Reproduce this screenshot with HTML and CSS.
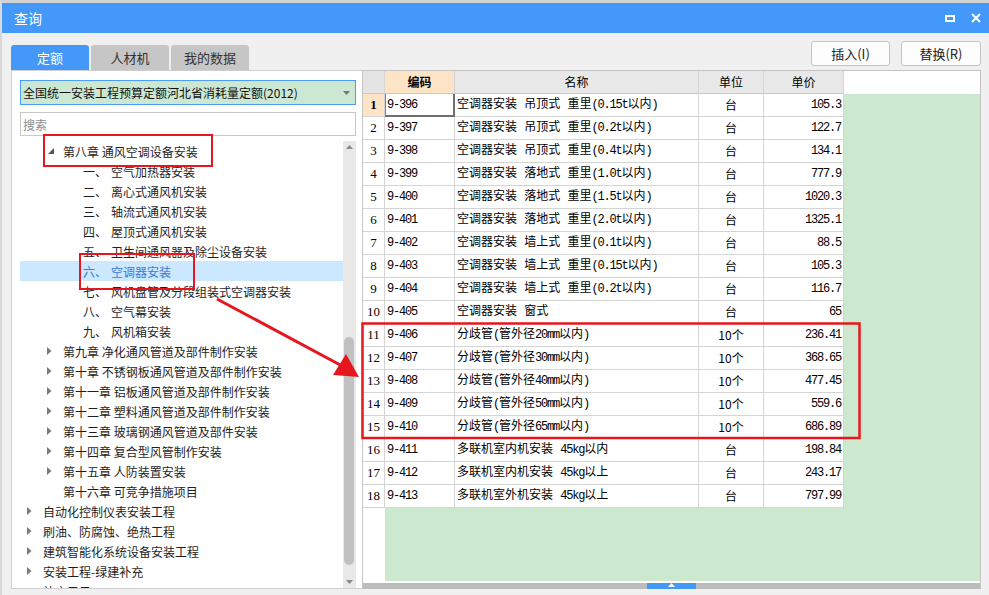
FILE: index.html
```html
<!DOCTYPE html>
<html lang="zh-CN">
<head>
<meta charset="utf-8">
<title>查询</title>
<link rel="stylesheet" href="styles.css">
</head>
<body>
<div class="page">
  <div class="window">
    <div class="titlebar">
      <span class="title">查询</span>
      <svg class="wb-max" width="10" height="7" viewBox="0 0 10 7"><rect x="1" y="1" width="8" height="5" fill="none" stroke="#fff" stroke-width="2"/></svg>
      <svg class="wb-close" width="10" height="10" viewBox="0 0 10 10"><path d="M1 1L9 9M9 1L1 9" stroke="#fff" stroke-width="2"/></svg>
    </div>
    <div class="content">
      <div class="toolbar">
        <div class="tabs">
          <div class="tab active">定额</div>
          <div class="tab">人材机</div>
          <div class="tab">我的数据</div>
        </div>
        <div class="actions">
          <button class="btn btn-insert">插入(I)</button>
          <button class="btn btn-replace">替换(R)</button>
        </div>
      </div>
      <div class="main">
        <div class="left">
          <div class="select">
            <span class="select-text">全国统一安装工程预算定额河北省消耗量定额(2012)</span>
            <svg class="caret" width="7" height="4" viewBox="0 0 7 4"><polygon points="0,0 7,0 3.5,4"/></svg>
          </div>
          <div class="search">搜索</div>
          <div class="tree-wrap">
            <div class="tree">
              <div class="row l2"><span class="exp"><svg class="open" width="6" height="6" viewBox="0 0 6 6"><polygon points="6,0 6,6 0,6"/></svg></span><span>第八章 通风空调设备安装</span></div>
              <div class="row l3"><span class="num">一、</span><span>空气加热器安装</span></div>
              <div class="row l3"><span class="num">二、</span><span>离心式通风机安装</span></div>
              <div class="row l3"><span class="num">三、</span><span>轴流式通风机安装</span></div>
              <div class="row l3"><span class="num">四、</span><span>屋顶式通风机安装</span></div>
              <div class="row l3"><span class="num">五、</span><span>卫生间通风器及除尘设备安装</span></div>
              <div class="row l3 sel"><span class="num">六、</span><span>空调器安装</span></div>
              <div class="row l3"><span class="num">七、</span><span>风机盘管及分段组装式空调器安装</span></div>
              <div class="row l3"><span class="num">八、</span><span>空气幕安装</span></div>
              <div class="row l3"><span class="num">九、</span><span>风机箱安装</span></div>
              <div class="row l2"><span class="exp"><svg width="5" height="8" viewBox="0 0 5 8"><polygon points="0,0 4.5,4 0,8"/></svg></span><span>第九章 净化通风管道及部件制作安装</span></div>
              <div class="row l2"><span class="exp"><svg width="5" height="8" viewBox="0 0 5 8"><polygon points="0,0 4.5,4 0,8"/></svg></span><span>第十章 不锈钢板通风管道及部件制作安装</span></div>
              <div class="row l2"><span class="exp"><svg width="5" height="8" viewBox="0 0 5 8"><polygon points="0,0 4.5,4 0,8"/></svg></span><span>第十一章 铝板通风管道及部件制作安装</span></div>
              <div class="row l2"><span class="exp"><svg width="5" height="8" viewBox="0 0 5 8"><polygon points="0,0 4.5,4 0,8"/></svg></span><span>第十二章 塑料通风管道及部件制作安装</span></div>
              <div class="row l2"><span class="exp"><svg width="5" height="8" viewBox="0 0 5 8"><polygon points="0,0 4.5,4 0,8"/></svg></span><span>第十三章 玻璃钢通风管道及部件安装</span></div>
              <div class="row l2"><span class="exp"><svg width="5" height="8" viewBox="0 0 5 8"><polygon points="0,0 4.5,4 0,8"/></svg></span><span>第十四章 复合型风管制作安装</span></div>
              <div class="row l2"><span class="exp"><svg width="5" height="8" viewBox="0 0 5 8"><polygon points="0,0 4.5,4 0,8"/></svg></span><span>第十五章 人防装置安装</span></div>
              <div class="row l2"><span class="exp"></span><span>第十六章 可竞争措施项目</span></div>
              <div class="row l1"><span class="exp"><svg width="5" height="8" viewBox="0 0 5 8"><polygon points="0,0 4.5,4 0,8"/></svg></span><span>自动化控制仪表安装工程</span></div>
              <div class="row l1"><span class="exp"><svg width="5" height="8" viewBox="0 0 5 8"><polygon points="0,0 4.5,4 0,8"/></svg></span><span>刷油、防腐蚀、绝热工程</span></div>
              <div class="row l1"><span class="exp"><svg width="5" height="8" viewBox="0 0 5 8"><polygon points="0,0 4.5,4 0,8"/></svg></span><span>建筑智能化系统设备安装工程</span></div>
              <div class="row l1"><span class="exp"><svg width="5" height="8" viewBox="0 0 5 8"><polygon points="0,0 4.5,4 0,8"/></svg></span><span>安装工程-绿建补充</span></div>
              <div class="row l1"><span class="exp"></span><span>补充子目</span></div>
            </div>
            <div class="vscroll">
              <div class="sb-btn"><svg width="7" height="4" viewBox="0 0 7 4"><polygon points="0,4 7,4 3.5,0"/></svg></div>
              <div class="track"><div class="thumb"></div></div>
              <div class="sb-btn"><svg width="7" height="4" viewBox="0 0 7 4"><polygon points="0,0 7,0 3.5,4"/></svg></div>
            </div>
          </div>
        </div>
        <div class="right">
          <div class="grid">
            <div class="h corner"></div><div class="h hsel">编码</div><div class="h">名称</div><div class="h">单位</div><div class="h">单价</div><div class="hf"></div>

            <div class="rn rsel">1</div><div class="cd csel">9-396</div><div class="nm">空调器安装 吊顶式 重里<span class="m">(0.15t</span>以内<span class="m">)</span></div><div class="un">台</div><div class="pr">105.3</div><div class="fl"></div>
            <div class="rn">2</div><div class="cd">9-397</div><div class="nm">空调器安装 吊顶式 重里<span class="m">(0.2t</span>以内<span class="m">)</span></div><div class="un">台</div><div class="pr">122.7</div><div class="fl"></div>
            <div class="rn">3</div><div class="cd">9-398</div><div class="nm">空调器安装 吊顶式 重里<span class="m">(0.4t</span>以内<span class="m">)</span></div><div class="un">台</div><div class="pr">134.1</div><div class="fl"></div>
            <div class="rn">4</div><div class="cd">9-399</div><div class="nm">空调器安装 落地式 重里<span class="m">(1.0t</span>以内<span class="m">)</span></div><div class="un">台</div><div class="pr">777.9</div><div class="fl"></div>
            <div class="rn">5</div><div class="cd">9-400</div><div class="nm">空调器安装 落地式 重里<span class="m">(1.5t</span>以内<span class="m">)</span></div><div class="un">台</div><div class="pr">1020.3</div><div class="fl"></div>
            <div class="rn">6</div><div class="cd">9-401</div><div class="nm">空调器安装 落地式 重里<span class="m">(2.0t</span>以内<span class="m">)</span></div><div class="un">台</div><div class="pr">1325.1</div><div class="fl"></div>
            <div class="rn">7</div><div class="cd">9-402</div><div class="nm">空调器安装 墙上式 重里<span class="m">(0.1t</span>以内<span class="m">)</span></div><div class="un">台</div><div class="pr">88.5</div><div class="fl"></div>
            <div class="rn">8</div><div class="cd">9-403</div><div class="nm">空调器安装 墙上式 重里<span class="m">(0.15t</span>以内<span class="m">)</span></div><div class="un">台</div><div class="pr">105.3</div><div class="fl"></div>
            <div class="rn">9</div><div class="cd">9-404</div><div class="nm">空调器安装 墙上式 重里<span class="m">(0.2t</span>以内<span class="m">)</span></div><div class="un">台</div><div class="pr">116.7</div><div class="fl"></div>
            <div class="rn">10</div><div class="cd">9-405</div><div class="nm">空调器安装 窗式</div><div class="un">台</div><div class="pr">65</div><div class="fl"></div>
            <div class="rn">11</div><div class="cd">9-406</div><div class="nm">分歧管<span class="m">(</span>管外径<span class="m">20mm</span>以内<span class="m">)</span></div><div class="un">10个</div><div class="pr">236.41</div><div class="fl"></div>
            <div class="rn">12</div><div class="cd">9-407</div><div class="nm">分歧管<span class="m">(</span>管外径<span class="m">30mm</span>以内<span class="m">)</span></div><div class="un">10个</div><div class="pr">368.65</div><div class="fl"></div>
            <div class="rn">13</div><div class="cd">9-408</div><div class="nm">分歧管<span class="m">(</span>管外径<span class="m">40mm</span>以内<span class="m">)</span></div><div class="un">10个</div><div class="pr">477.45</div><div class="fl"></div>
            <div class="rn">14</div><div class="cd">9-409</div><div class="nm">分歧管<span class="m">(</span>管外径<span class="m">50mm</span>以内<span class="m">)</span></div><div class="un">10个</div><div class="pr">559.6</div><div class="fl"></div>
            <div class="rn">15</div><div class="cd">9-410</div><div class="nm">分歧管<span class="m">(</span>管外径<span class="m">65mm</span>以内<span class="m">)</span></div><div class="un">10个</div><div class="pr">686.89</div><div class="fl"></div>
            <div class="rn">16</div><div class="cd">9-411</div><div class="nm">多联机室内机安装 <span class="m">45kg</span>以内</div><div class="un">台</div><div class="pr">198.84</div><div class="fl"></div>
            <div class="rn">17</div><div class="cd">9-412</div><div class="nm">多联机室内机安装 <span class="m">45kg</span>以上</div><div class="un">台</div><div class="pr">243.17</div><div class="fl"></div>
            <div class="rn">18</div><div class="cd">9-413</div><div class="nm">多联机室外机安装 <span class="m">45kg</span>以上</div><div class="un">台</div><div class="pr">797.99</div><div class="fl"></div>

            <div class="rn-fill"></div><div class="fl-bottom"></div>
          </div>
          <div class="hscroll">
            <div class="hthumb"><svg width="7" height="4" viewBox="0 0 7 4"><polygon points="0,4 7,4 3.5,0" fill="#fff"/></svg></div>
          </div>
        </div>
      </div>
    </div>
  </div>
  <svg class="overlay" width="989" height="595" viewBox="0 0 989 595">
    <rect x="44" y="135" width="168" height="31" fill="none" stroke="#e6161e" stroke-width="2"/>
    <rect x="80" y="254" width="114" height="35" fill="none" stroke="#e6161e" stroke-width="2"/>
    <rect x="362.5" y="323.5" width="497" height="114.5" fill="none" stroke="#e6161e" stroke-width="2.5"/>
    <line x1="217" y1="299" x2="344" y2="367" stroke="#e6161e" stroke-width="3"/>
    <polygon points="359,377 333,375 346,354" fill="#e6161e"/>
  </svg>
</div>
</body>
</html>
```

FILE: styles.css
```css
* { box-sizing: border-box; }
html, body { margin: 0; padding: 0; }
body {
  width: 989px;
  height: 595px;
  overflow: hidden;
  background: #f0f0f0;
  font-family: "Noto Sans CJK SC", "Noto Sans", sans-serif;
  font-size: 12px;
  color: #1e1e1e;
}
.page { position: relative; width: 989px; height: 595px; }
.window {
  width: 989px;
  height: 595px;
  border-top: 3px solid #d2d2d2;
  border-left: 2px solid #d9d9d9;
  background: #f0f0f0;
  display: flex;
  flex-direction: column;
}
.titlebar {
  flex: none;
  height: 30px;
  background: #4398fa;
  display: flex;
  align-items: center;
  padding-left: 12px;
  color: #fff;
  font-size: 14px;
}
.title { flex: 1; }
.wb-max { margin-right: 16px; }
.wb-close { margin-right: 8px; }

.content { flex: 1; padding: 8px 8px 0 9px; display: flex; flex-direction: column; }
.toolbar { height: 29px; display: flex; justify-content: space-between; flex: none; }
.tabs { display: flex; gap: 2px; align-self: flex-end; }
.tab {
  width: 78px;
  height: 25px;
  background: #c6c6c6;
  color: #333;
  font-size: 13px;
  display: flex;
  align-items: center;
  justify-content: center;
  border-radius: 3px 3px 0 0;
}
.tab.active { background: #4398fa; color: #fff; }
.actions { display: flex; gap: 11px; align-self: flex-start; }
.btn {
  height: 25px;
  background: #fdfdfd;
  border: 1px solid #c3c3c3;
  border-radius: 3px;
  font-family: "Noto Sans CJK SC", "Noto Sans", sans-serif;
  font-size: 13px;
  color: #222;
  padding: 0;
}
.btn-insert { width: 79px; }
.btn-replace { width: 80px; }

.main { height: 519px; display: flex; flex: none; }
.left {
  width: 351px;
  flex: none;
  background: #fff;
  border: 1px solid #cfcfcf;
  border-right: none;
  padding: 9px 6px 0 8px;
  display: flex;
  flex-direction: column;
}
.select {
  height: 25px;
  flex: none;
  border: 1px solid #4a9bfa;
  background: #cde8d2;
  display: flex;
  align-items: center;
  justify-content: space-between;
  padding: 0 5px 0 2px;
  color: #111;
}
.caret { fill: #777; }
.search {
  height: 24px;
  flex: none;
  margin-top: 7px;
  border: 1px solid #c8c8c8;
  color: #8c8c8c;
  padding-left: 2px;
  display: flex;
  align-items: center;
}
.tree-wrap { flex: 1; margin-top: 5px; display: flex; min-height: 0; }
.tree { flex: 1; overflow: hidden; }
.row { height: 20px; display: flex; align-items: center; white-space: nowrap; color: #1e1e1e; }
.l1 { padding-left: 7px; }
.l2 { padding-left: 27px; }
.l3 { padding-left: 63px; }
.exp { width: 16px; flex: none; display: flex; align-items: center; }
.exp svg { fill: #7a7a7a; }
.exp svg.open { fill: #555; margin-left: 1px; }
.num { width: 28px; flex: none; }
.row.sel { background: #cce8ff; color: #3a7bd5; }

.vscroll { width: 13px; flex: none; background: #e8e8e8; display: flex; flex-direction: column; }
.sb-btn { height: 12px; flex: none; display: flex; align-items: center; justify-content: center; }
.sb-btn svg { fill: #8a8a8a; }
.track { flex: 1; padding: 184px 1px 0 1px; }
.thumb { width: 10px; height: 228px; background: #c1c1c1; border-radius: 5px; }

.right {
  flex: 1;
  background: #fff;
  border: 1px solid #c4c4c4;
  border-bottom: none;
  display: flex;
  flex-direction: column;
  min-width: 0;
}
.grid {
  flex: 1;
  display: grid;
  grid-template-columns: 22px 70px 244px 65px 80px 1fr;
  grid-template-rows: repeat(19, 23px) 1fr;
  font-family: "Liberation Mono", "Noto Sans CJK SC", monospace;
  font-size: 12px;
  color: #000;
}
.grid > div {
  border-right: 1px solid #d4d4d4;
  border-bottom: 1px solid #d4d4d4;
  line-height: 22px;
  white-space: nowrap;
  overflow: hidden;
}
.h {
  background: #e8e8e8;
  text-align: center;
  font-family: "Noto Sans CJK SC", sans-serif;
  border-bottom-color: #c8c8c8 !important;
}
.h.corner { background: #e4e4e4; }
.h.hsel { background: #fde4c6; font-weight: bold; }
.grid > .hf { background: #fff; border: none; }
.grid > .fl { background: #cce8cf; border: none; }
.rn {
  text-align: center;
  font-family: "Liberation Serif", serif;
  font-size: 13px;
  background: #fff;
}
.rn.rsel { background: #fde4c6; font-weight: bold; }
.cd { padding-left: 2px; letter-spacing: -1.2px; }
.cd.csel {
  border-right: 1px solid #6f6f6f !important;
  border-bottom: 1px solid #6f6f6f !important;
  box-shadow: inset 1px 0 0 #3d8ef0, inset -1px -1px 0 #6f6f6f;
}
.nm { padding-left: 2px; }
.m { letter-spacing: -1.2px; }
.un { text-align: center; font-family: "Noto Sans CJK SC", sans-serif; }
.pr { text-align: right; padding-right: 2px; letter-spacing: -1.2px; }
.grid > .rn-fill { background: #fff; border: none; }
.grid > .fl-bottom { grid-column: 2 / -1; background: #cce8cf; border: none; }

.hscroll {
  height: 8px;
  flex: none;
  border-top: 2px solid #fff;
  background: #bcbcbc;
  display: flex;
}
.hthumb {
  margin-left: 284px;
  width: 49px;
  height: 6px;
  background: #4398fa;
  display: flex;
  align-items: flex-start;
  justify-content: center;
}

.overlay { position: absolute; top: 0; left: 0; pointer-events: none; }
```
